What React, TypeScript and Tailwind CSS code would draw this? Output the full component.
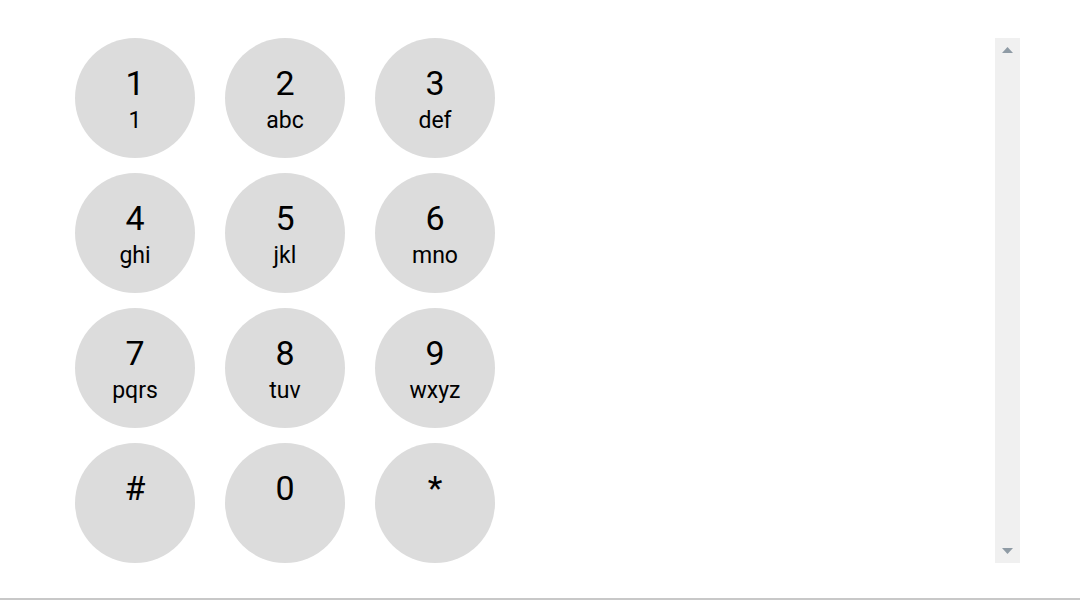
const keys = [
  { digit: '1', letters: '1' },
  { digit: '2', letters: 'abc' },
  { digit: '3', letters: 'def' },
  { digit: '4', letters: 'ghi' },
  { digit: '5', letters: 'jkl' },
  { digit: '6', letters: 'mno' },
  { digit: '7', letters: 'pqrs' },
  { digit: '8', letters: 'tuv' },
  { digit: '9', letters: 'wxyz' },
  { digit: '#', letters: '' },
  { digit: '0', letters: '' },
  { digit: '*', letters: '' },
];

export default function App() {
  return (
    <div className="h-[600px] w-[1080px] bg-white border-b-2 border-[#c8c8c8] flex justify-between pl-[75px] pr-[60px] pt-[38px] font-['Roboto',sans-serif] text-black">
      <div className="grid grid-cols-3 gap-x-[30px] gap-y-[15px] content-start">
        {keys.map(k => (
          <button
            key={k.digit}
            className="w-[120px] h-[120px] rounded-full bg-[#dcdcdc] flex flex-col items-center pt-[25px]"
          >
            <span className="text-[34px] leading-[40px]">{k.digit}</span>
            {k.letters && <span className="text-[23px] leading-[26px] mt-[5px]">{k.letters}</span>}
          </button>
        ))}
      </div>

      {/* scroll track */}
      <div className="w-[25px] h-[525px] bg-[#f0f0f0] flex flex-col justify-between items-center py-[9px]">
        <svg width="11" height="6" viewBox="0 0 11 6">
          <path d="M5.5 0 L11 6 L0 6 Z" fill="#8f9ba5" />
        </svg>
        <svg width="11" height="6" viewBox="0 0 11 6">
          <path d="M0 0 L11 0 L5.5 6 Z" fill="#8f9ba5" />
        </svg>
      </div>
    </div>
  );
}
